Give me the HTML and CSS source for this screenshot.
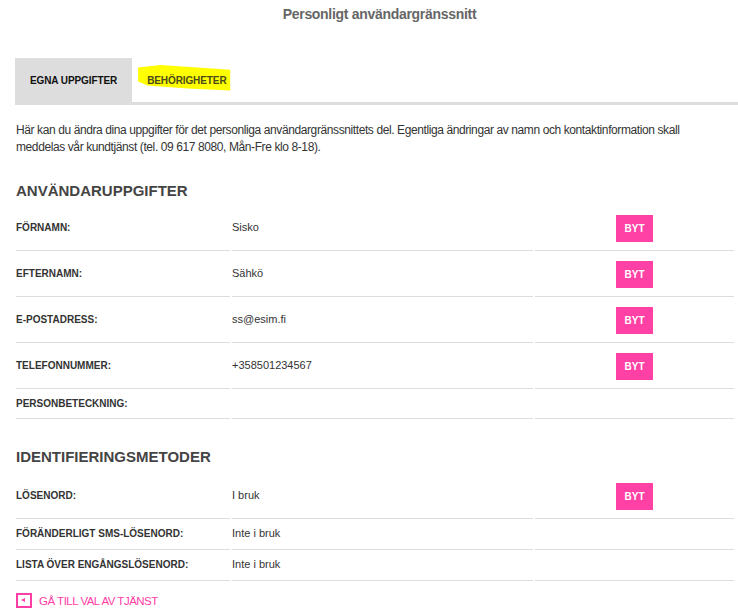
FILE: index.html
```html
<!DOCTYPE html>
<html lang="sv">
<head>
    <meta charset="UTF-8">
    <meta name="viewport" content="width=device-width, initial-scale=1.0">
    <title>Personligt användargränssnitt</title>
    <link rel="stylesheet" href="styles.css">
</head>
<body>
    <div class="page">
        <h1 class="page-title">Personligt användargränssnitt</h1>

        <div class="tabs">
            <a class="tab tab-active">EGNA UPPGIFTER</a>
            <a class="tab"><span class="marked">BEHÖRIGHETER</span></a>
        </div>

        <p class="intro">Här kan du ändra dina uppgifter för det personliga användargränssnittets del. Egentliga ändringar av namn och kontaktinformation skall meddelas vår kundtjänst (tel. 09 617 8080, Mån-Fre klo 8-18).</p>

        <h2 class="section-title first">ANVÄNDARUPPGIFTER</h2>
        <table class="info-table">
            <colgroup>
                <col class="col-label">
                <col class="col-value">
                <col class="col-action">
            </colgroup>
            <tr>
                <td class="label">FÖRNAMN:</td>
                <td class="value">Sisko</td>
                <td class="action"><button class="change-button">BYT</button></td>
            </tr>
            <tr>
                <td class="label">EFTERNAMN:</td>
                <td class="value">Sähkö</td>
                <td class="action"><button class="change-button">BYT</button></td>
            </tr>
            <tr>
                <td class="label">E-POSTADRESS:</td>
                <td class="value">ss@esim.fi</td>
                <td class="action"><button class="change-button">BYT</button></td>
            </tr>
            <tr>
                <td class="label">TELEFONNUMMER:</td>
                <td class="value">+358501234567</td>
                <td class="action"><button class="change-button">BYT</button></td>
            </tr>
            <tr>
                <td class="label">PERSONBETECKNING:</td>
                <td class="value"></td>
                <td class="action"></td>
            </tr>
        </table>

        <h2 class="section-title">IDENTIFIERINGSMETODER</h2>
        <table class="info-table methods">
            <colgroup>
                <col class="col-label">
                <col class="col-value">
                <col class="col-action">
            </colgroup>
            <tr>
                <td class="label">LÖSENORD:</td>
                <td class="value">I bruk</td>
                <td class="action"><button class="change-button">BYT</button></td>
            </tr>
            <tr>
                <td class="label">FÖRÄNDERLIGT SMS-LÖSENORD:</td>
                <td class="value">Inte i bruk</td>
                <td class="action"></td>
            </tr>
            <tr>
                <td class="label">LISTA ÖVER ENGÅNGSLÖSENORD:</td>
                <td class="value">Inte i bruk</td>
                <td class="action"></td>
            </tr>
        </table>

        <a class="back-link" href="#">
            <span class="back-icon"></span>
            GÅ TILL VAL AV TJÄNST
        </a>
    </div>
</body>
</html>
```

FILE: styles.css
```css
body {
    font-family: "Liberation Sans", Arial, sans-serif;
    margin: 0;
    background: white;
    color: #333;
}
.page {
    padding-left: 15px;
}
.page-title {
    margin: 0;
    padding: 6px 0 0 6px;
    font-size: 14px;
    line-height: 16px;
    letter-spacing: -0.3px;
    text-align: center;
    color: #666;
}
.tabs {
    display: flex;
    margin-top: 36px;
    border-bottom: 3px solid #ddd;
}
.tab {
    display: flex;
    align-items: center;
    height: 44px;
    padding: 0 15px;
    font-size: 10px;
    font-weight: bold;
    letter-spacing: -0.1px;
    color: #111;
    text-decoration: none;
}
.tab-active {
    background: #ddd;
}
.marked {
    position: relative;
    color: #4a4a1a;
}
.marked::before {
    content: "";
    position: absolute;
    left: -9px;
    top: -10px;
    width: 93px;
    height: 27px;
    background: #ffff00;
    clip-path: polygon(0% 11%, 24% 2%, 99% 19%, 99% 96%, 53% 89%, 10% 78%, 0% 63%);
    z-index: -1;
}
.intro {
    max-width: 690px;
    margin: 17px 0 0 1px;
    font-size: 12px;
    line-height: 17px;
    letter-spacing: -0.4px;
    color: #333;
}
.section-title {
    margin: 29px 0 7px 1px;
    font-size: 15px;
    line-height: 18px;
    color: #444;
}
.section-title.first {
    margin: 26px 0 5px 1px;
}
.info-table {
    width: 722px;
    margin-left: -1px;
    table-layout: fixed;
    border-collapse: separate;
    border-spacing: 2px 0;
}
.col-label {
    width: 214px;
}
.col-value {
    width: 301px;
}
.info-table td {
    padding: 8px 0;
    border-bottom: 1px solid #ddd;
    vertical-align: middle;
    line-height: 13px;
}
.methods td {
    padding: 8px 0 9px;
}
.label {
    font-size: 10px;
    font-weight: bold;
    color: #333;
}
.value {
    font-size: 11px;
    color: #333;
}
.info-table td.action {
    text-align: center;
    padding: 10px 0 8px;
}
.change-button {
    width: 37px;
    height: 27px;
    padding: 0;
    border: none;
    background: #ff40a5;
    color: white;
    font-family: "Liberation Sans", Arial, sans-serif;
    font-size: 10px;
    font-weight: bold;
    vertical-align: top;
    cursor: pointer;
}
.back-link {
    display: flex;
    align-items: center;
    gap: 7px;
    margin: 12px 0 0 1px;
    font-size: 11.5px;
    letter-spacing: -0.5px;
    color: #ff3ea5;
    text-decoration: none;
}
.back-icon {
    position: relative;
    width: 12px;
    height: 11px;
    border: 2px solid #ff3ea5;
}
.back-icon::after {
    content: "";
    position: absolute;
    left: 3px;
    top: 3px;
    border-top: 2.5px solid transparent;
    border-bottom: 2.5px solid transparent;
    border-right: 4px solid #ff3ea5;
}
```
